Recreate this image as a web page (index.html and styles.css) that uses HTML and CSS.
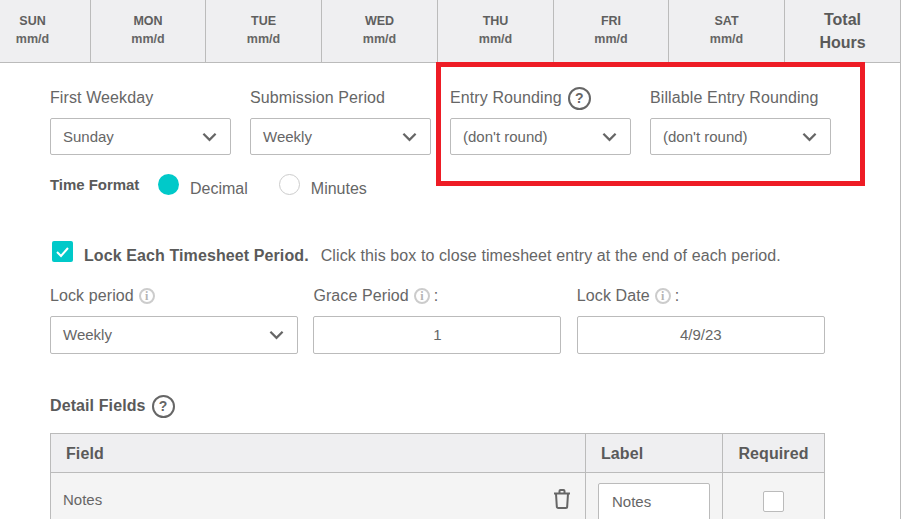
FILE: index.html
```html
<!DOCTYPE html>
<html lang="en">

<head>
  <meta charset="UTF-8">
  <title>Timesheet Settings</title>
  <link rel="stylesheet" href="styles.css">
</head>

<body>
  <div class="page">
    <div class="week">
      <div class="day first"><b>SUN</b><span>mm/d</span></div>
      <div class="day"><b>MON</b><span>mm/d</span></div>
      <div class="day"><b>TUE</b><span>mm/d</span></div>
      <div class="day"><b>WED</b><span>mm/d</span></div>
      <div class="day"><b>THU</b><span>mm/d</span></div>
      <div class="day"><b>FRI</b><span>mm/d</span></div>
      <div class="day"><b>SAT</b><span>mm/d</span></div>
      <div class="day total">Total<br>Hours</div>
    </div>

    <div class="settings">
      <div class="four-up">
        <div class="field">
          <div class="label">First Weekday</div>
          <div class="select">Sunday
            <svg class="chevron" viewBox="0 0 16 10"><polyline points="1.5,1.5 8,8 14.5,1.5" /></svg>
          </div>
        </div>
        <div class="field">
          <div class="label">Submission Period</div>
          <div class="select">Weekly
            <svg class="chevron" viewBox="0 0 16 10"><polyline points="1.5,1.5 8,8 14.5,1.5" /></svg>
          </div>
        </div>
        <div class="field">
          <div class="label">Entry Rounding <span class="help">?</span></div>
          <div class="select">(don't round)
            <svg class="chevron" viewBox="0 0 16 10"><polyline points="1.5,1.5 8,8 14.5,1.5" /></svg>
          </div>
        </div>
        <div class="field">
          <div class="label">Billable Entry Rounding</div>
          <div class="select">(don't round)
            <svg class="chevron" viewBox="0 0 16 10"><polyline points="1.5,1.5 8,8 14.5,1.5" /></svg>
          </div>
        </div>
      </div>

      <div class="time-format">
        <b>Time Format</b>
        <span class="radio on"></span>
        <span class="radio-text">Decimal</span>
        <span class="radio"></span>
        <span class="radio-text">Minutes</span>
      </div>

      <div class="lock-line">
        <span class="check">
          <svg viewBox="0 0 21 21"><polyline points="5,11 9,15 16,7" /></svg>
        </span>
        <b>Lock Each Timesheet Period.</b>
        <span>Click this box to close timesheet entry at the end of each period.</span>
      </div>

      <div class="three-up">
        <div class="field">
          <div class="label">Lock period <span class="info">i</span></div>
          <div class="select tall">Weekly
            <svg class="chevron" viewBox="0 0 16 10"><polyline points="1.5,1.5 8,8 14.5,1.5" /></svg>
          </div>
        </div>
        <div class="field">
          <div class="label">Grace Period <span class="info">i</span> :</div>
          <div class="select tall center">1</div>
        </div>
        <div class="field">
          <div class="label">Lock Date <span class="info">i</span> :</div>
          <div class="select tall center">4/9/23</div>
        </div>
      </div>

      <div class="detail-title"><b>Detail Fields</b> <span class="help">?</span></div>

      <div class="detail-table">
        <div class="th">Field</div>
        <div class="th">Label</div>
        <div class="th mid">Required</div>
        <div class="td name">
          <span>Notes</span>
          <svg class="trash" viewBox="0 0 18 20">
            <path d="M1 4.5h16M6.5 4.5V2a1 1 0 0 1 1-1h3a1 1 0 0 1 1 1v2.5M3 4.5l.8 13a1.5 1.5 0 0 0 1.5 1.5h7.4a1.5 1.5 0 0 0 1.5-1.5l.8-13" />
          </svg>
        </div>
        <div class="td"><div class="text-box">Notes</div></div>
        <div class="td mid"><span class="box"></span></div>
      </div>
    </div>

    <div class="highlight"></div>
  </div>
</body>

</html>
```

FILE: styles.css
```css
html,
body {
  margin: 0;
  padding: 0;
  background: #fff;
}

body {
  height: 519px;
  overflow: hidden;
  font-family: "Liberation Sans", Arial, sans-serif;
  color: #666;
}

.page {
  position: relative;
  width: 900px;
  height: 519px;
  border-right: 1px solid #bbb;
  overflow: hidden;
}

/* week header */
.week {
  display: grid;
  grid-template-columns: 91px 115px 116px 116px 116px 115px 116px 116px;
  height: 62px;
  margin-right: -1px;
  background: #efeff1;
  border-bottom: 1px solid #bbb;
}

.day {
  display: flex;
  flex-direction: column;
  align-items: center;
  justify-content: center;
  padding-bottom: 2px;
  box-sizing: border-box;
  border-right: 1px solid #bbb;
  font-size: 12.5px;
  line-height: 18px;
  font-weight: bold;
  color: #666;
}

.day b {
  color: #5f5f5f;
}

.day.first {
  padding-right: 25px;
}

.day.total {
  display: block;
  padding-top: 8px;
  text-align: center;
  font-size: 16px;
  line-height: 23px;
  color: #5a5a5a;
}

/* settings form */
.settings {
  padding: 24px 0 0 50px;
}

.four-up {
  display: grid;
  grid-template-columns: repeat(4, 181px);
  column-gap: 19px;
}

.three-up {
  display: grid;
  grid-template-columns: repeat(3, 248px);
  column-gap: 15.4px;
  margin-top: 20px;
}

.label {
  display: flex;
  align-items: center;
  gap: 4px;
  box-sizing: border-box;
  height: 20px;
  padding-top: 2px;
  font-size: 16px;
  letter-spacing: .1px;
  white-space: nowrap;
}

.select {
  position: relative;
  box-sizing: border-box;
  height: 37px;
  margin-top: 11px;
  padding-left: 12px;
  border: 1px solid #bbb;
  border-radius: 2px;
  font-size: 15px;
  line-height: 36px;
  background: #fff;
}

.select.tall {
  height: 38px;
  line-height: 36px;
}

.select.center {
  padding-left: 0;
  text-align: center;
}

.chevron {
  position: absolute;
  right: 13px;
  top: 13px;
  width: 15px;
  height: 10px;
  fill: none;
  stroke: #666;
  stroke-width: 2.4;
}

.help {
  display: inline-block;
  box-sizing: border-box;
  flex: none;
  width: 23px;
  height: 23px;
  margin-left: 2px;
  border: 2px solid #666;
  border-radius: 50%;
  font-size: 14px;
  line-height: 19px;
  font-weight: bold;
  letter-spacing: 0;
  text-align: center;
}

.info {
  display: inline-block;
  box-sizing: border-box;
  flex: none;
  width: 16px;
  height: 16px;
  margin-left: 1px;
  border: 2px solid #ccc;
  border-radius: 50%;
  font-family: "Liberation Serif", serif;
  font-size: 12px;
  font-weight: bold;
  line-height: 12px;
  text-align: center;
  color: #b4b4b4;
}

.time-format {
  display: flex;
  align-items: flex-start;
  height: 24px;
  margin-top: 19px;
  font-size: 16px;
}

.time-format b {
  margin-top: 1px;
  width: 108px;
  font-size: 15px;
  line-height: 20px;
  letter-spacing: -.05px;
  color: #5a5a5a;
}

.radio {
  box-sizing: border-box;
  width: 21px;
  height: 21px;
  border: 1px solid #ccc;
  border-radius: 50%;
  background: #fff;
}

.radio.on {
  border: 0;
  background: #00c9c9;
}

.radio-text {
  margin: 5px 31px 0 11px;
  line-height: 20px;
}

.lock-line {
  display: flex;
  align-items: flex-end;
  height: 25px;
  margin-top: 43px;
  margin-bottom: -1px;
  padding-left: 2px;
  font-size: 16px;
  line-height: 20px;
  letter-spacing: .1px;
  white-space: nowrap;
}

.lock-line b {
  margin: 0 12px 0 11px;
  color: #5a5a5a;
}

.check {
  align-self: flex-start;
  width: 21px;
  height: 21px;
  border-radius: 2px;
  background: #00c9c9;
}

.check svg {
  display: block;
  width: 21px;
  height: 21px;
  fill: none;
  stroke: #fff;
  stroke-width: 2;
}

.detail-title {
  display: flex;
  align-items: flex-start;
  gap: 4px;
  height: 23px;
  margin-top: 41px;
  font-size: 16px;
  line-height: 22px;
  letter-spacing: .1px;
}

.detail-title b {
  color: #5a5a5a;
}

.detail-table {
  display: grid;
  grid-template-columns: 535px 137px 101px;
  width: 775px;
  margin-top: 15px;
  box-sizing: border-box;
  border: 1px solid #bbb;
  border-bottom: 0;
  background: #f4f4f4;
}

.th {
  box-sizing: border-box;
  height: 39px;
  padding-left: 15px;
  border-bottom: 1px solid #bbb;
  border-right: 1px solid #bbb;
  background: #efeff1;
  font-size: 16px;
  line-height: 40px;
  font-weight: bold;
  letter-spacing: .1px;
  color: #5a5a5a;
}

.th:nth-child(3) {
  border-right: 0;
}

.th.mid {
  padding-left: 0;
  text-align: center;
}

.td {
  box-sizing: border-box;
  height: 60px;
  border-right: 1px solid #bbb;
}

.td:last-child {
  border-right: 0;
}

.td.name {
  display: flex;
  justify-content: space-between;
  align-items: flex-start;
  padding: 16px 14px 0 12px;
  font-size: 15px;
  line-height: 22px;
}

.trash {
  width: 18px;
  height: 20px;
  fill: none;
  stroke: #666;
  stroke-width: 2;
}

.text-box {
  box-sizing: border-box;
  width: 112px;
  height: 50px;
  margin: 10px 0 0 12px;
  padding: 8px 0 0 13px;
  border: 1px solid #bbb;
  border-radius: 2px;
  background: #fff;
  font-size: 15px;
  line-height: 20px;
}

.td.mid {
  text-align: center;
  padding-top: 18px;
}

.box {
  display: inline-block;
  box-sizing: border-box;
  width: 21px;
  height: 21px;
  border: 1px solid #bbb;
  border-radius: 2px;
  background: #fff;
}

/* red annotation over the rounding fields */
.highlight {
  position: absolute;
  left: 436px;
  top: 62px;
  width: 429px;
  height: 124px;
  box-sizing: border-box;
  border: 5px solid #ee1c25;
}
```
